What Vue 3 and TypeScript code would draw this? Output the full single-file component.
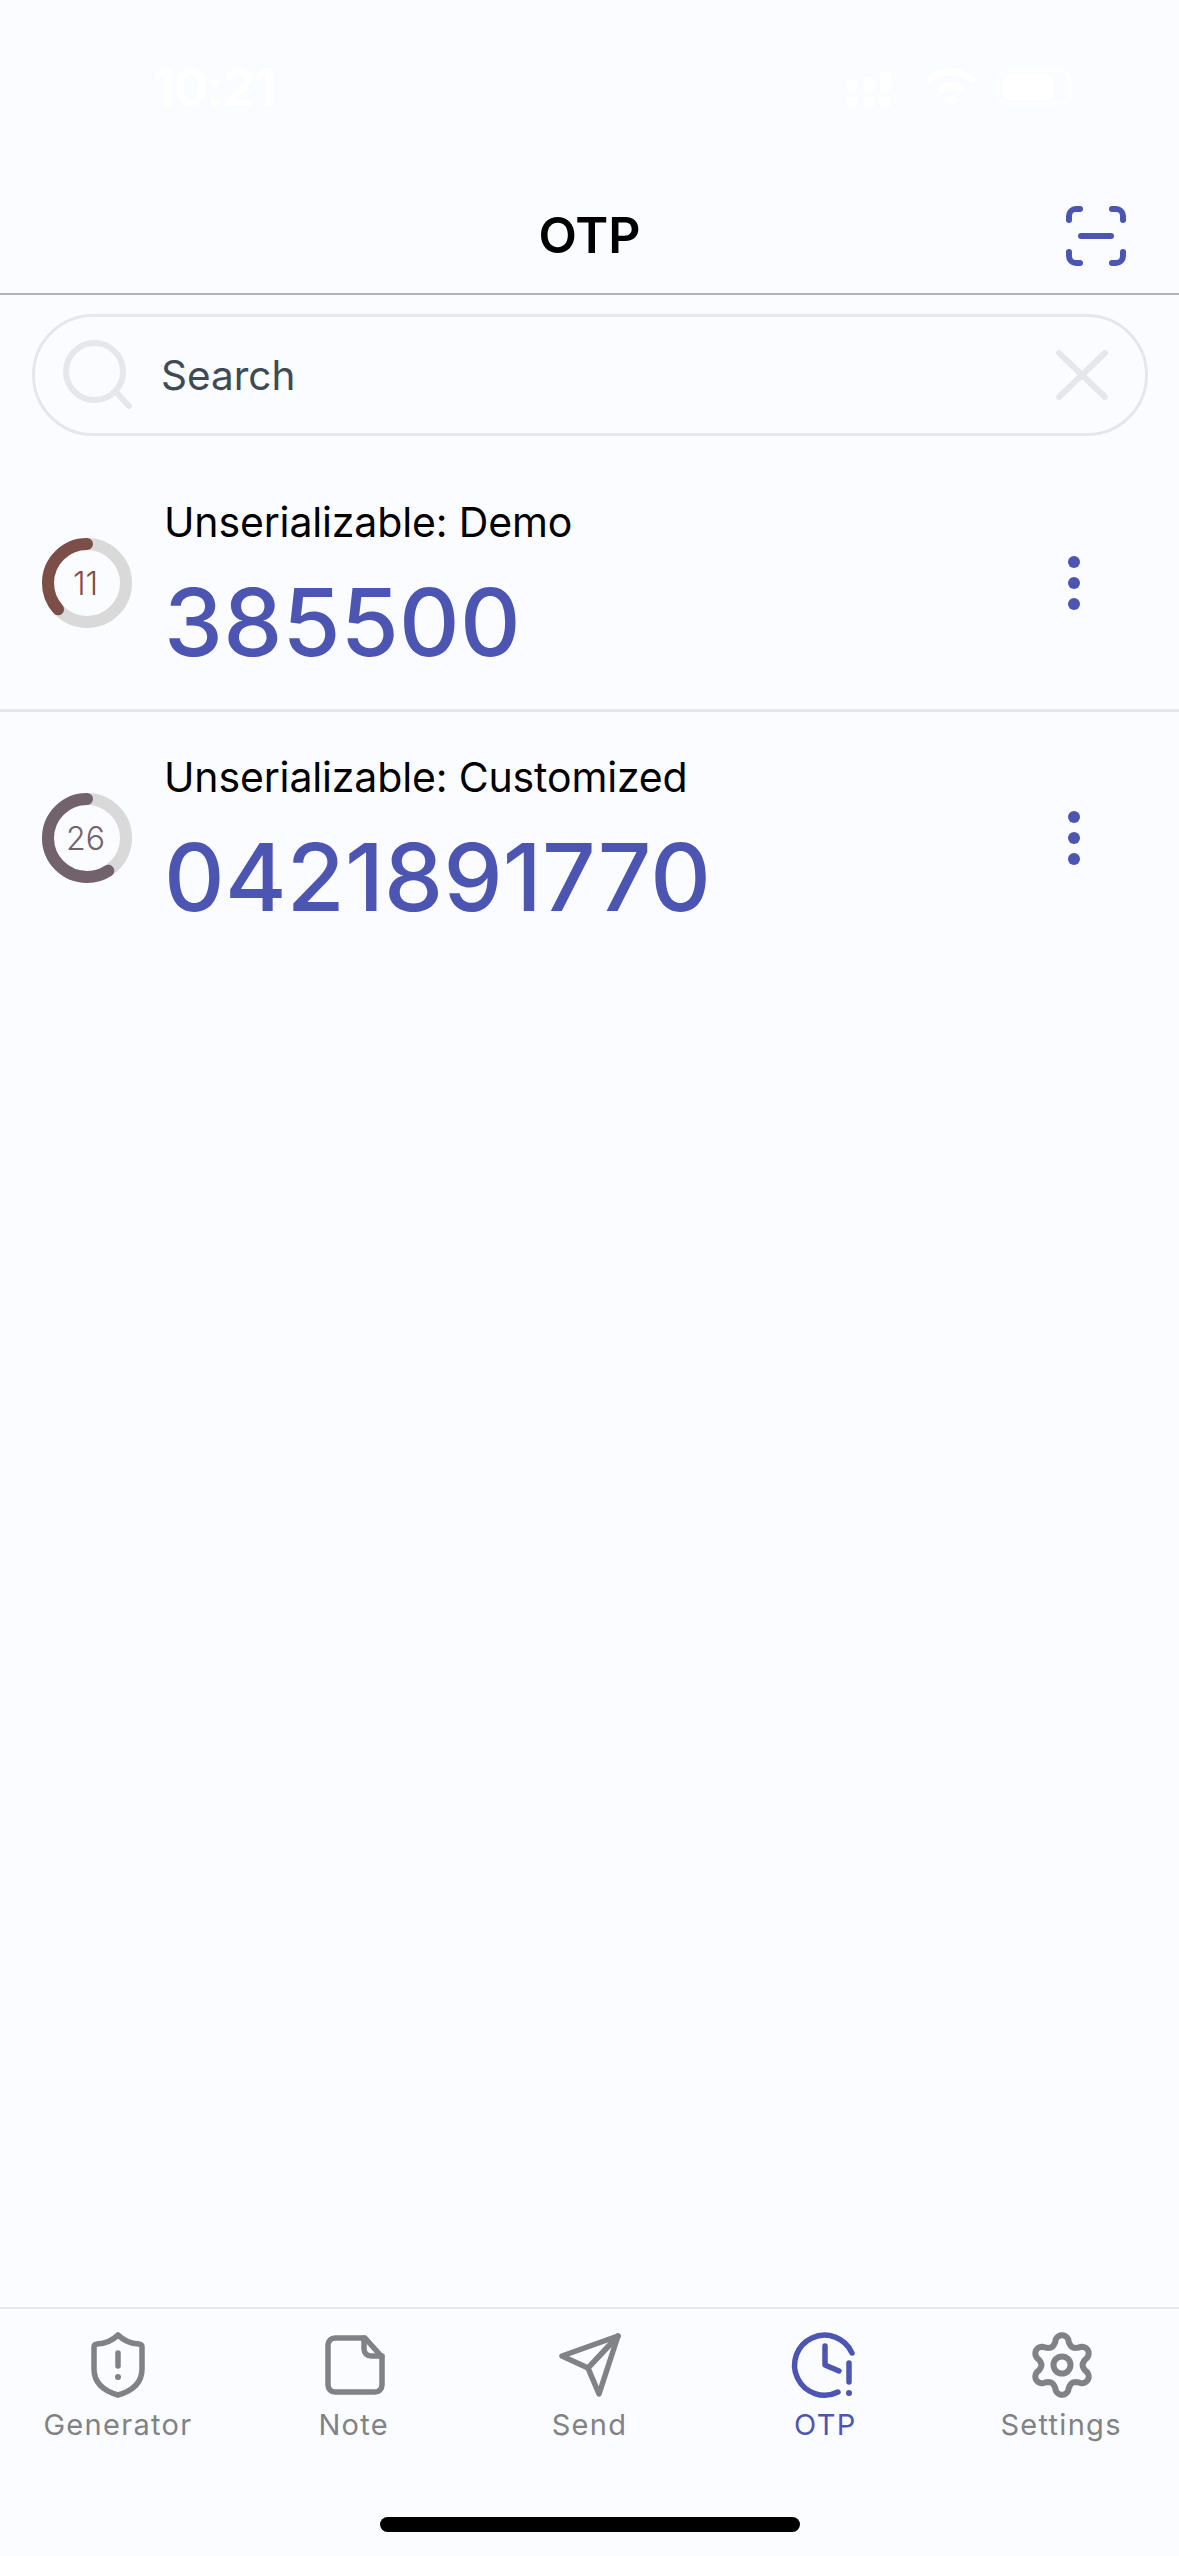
<script setup lang="ts">
const gearPath = (() => {
  const pts: string[] = []
  const n = 240
  for (let i = 0; i < n; i++) {
    const t = (i / n) * Math.PI * 2
    const c = Math.cos(6 * t)
    const r = 25.2 + 4.6 * Math.sign(c) * Math.pow(Math.abs(c), 0.7)
    const x = 37 + r * Math.sin(t)
    const y = 36 - r * Math.cos(t)
    pts.push(`${x.toFixed(2)} ${y.toFixed(2)}`)
  }
  return 'M' + pts.join('L') + 'Z'
})()

const circ = 2 * Math.PI * 39
const rows = [
  { title: 'Unserializable: Demo', code: '385500', left: 11, period: 30, color: '#7b4f47' },
  { title: 'Unserializable: Customized', code: '0421891770', left: 26, period: 44, color: '#71626c' },
]
const dash = (left: number, period: number) => `${(left / period) * circ} ${circ}`
</script>

<template>
  <div class="page">
    <div class="status">
      <span class="time">10:21</span>
      <svg class="status-icons" width="240" height="70" viewBox="0 0 240 70" fill="#fff">
        <rect x="7" y="30" width="10" height="12" rx="4" />
        <rect x="24" y="27" width="10" height="15" rx="4" />
        <rect x="40" y="22" width="10" height="20" rx="4" />
        <rect x="7" y="47" width="10" height="11" rx="4" />
        <rect x="24" y="47" width="10" height="11" rx="4" />
        <rect x="40" y="47" width="10" height="11" rx="4" />
        <path d="M90 30a30 30 0 0 1 42 0M101 39a15 15 0 0 1 20 0" fill="none" stroke="#fff" stroke-width="6" stroke-linecap="round" />
        <path d="M104 49a10 10 0 0 1 14 0L111 56Z" />
        <rect x="163" y="24" width="50" height="27" rx="9" />
        <rect x="158" y="21" width="72" height="33" rx="11" fill="none" stroke="#fff" stroke-width="3" opacity="0.5" />
      </svg>
    </div>

    <header class="bar">
      <h1 class="title">OTP</h1>
      <svg class="scan" width="72" height="72" viewBox="0 0 72 72" fill="none" stroke="#4c56b2" stroke-width="6" stroke-linecap="round">
        <path d="M9 20V16a7 7 0 0 1 7-7h4" />
        <path d="M52 9h4a7 7 0 0 1 7 7v4" />
        <path d="M9 52v4a7 7 0 0 0 7 7h4" />
        <path d="M63 52v4a7 7 0 0 1-7 7h-4" />
        <path d="M21 36h30" />
      </svg>
    </header>

    <div class="search">
      <svg class="search-icon" width="72" height="76" viewBox="0 0 72 76" fill="none" stroke="#e5e7eb" stroke-width="6" stroke-linecap="round">
        <circle cx="31.5" cy="34.5" r="28.5" />
        <path d="M52.5 54.5L66 69" />
      </svg>
      <span class="placeholder">Search</span>
      <svg class="clear" width="52" height="50" viewBox="0 0 52 50" fill="none" stroke="#e5e7eb" stroke-width="6" stroke-linecap="round">
        <path d="M3 3l46 44M49 3L3 47" />
      </svg>
    </div>

    <main class="list">
      <article v-for="(row, i) in rows" :key="row.code" class="row" :class="{ divided: i === 0 }">
        <div class="ring" :style="{ color: row.color }">
          <svg width="90" height="90" viewBox="0 0 90 90" fill="none" stroke-width="12">
            <circle cx="45" cy="45" r="39" stroke="#d9d9d9" />
            <circle
              cx="45"
              cy="45"
              r="39"
              :stroke="row.color"
              stroke-linecap="round"
              :stroke-dasharray="dash(row.left, row.period)"
              transform="translate(90 0) scale(-1 1) rotate(-90 45 45)"
            />
          </svg>
          <span class="ring-num">{{ row.left }}</span>
        </div>
        <div class="text">
          <div class="name">{{ row.title }}</div>
          <div class="code">{{ row.code }}</div>
        </div>
        <svg class="more" width="12" height="54" viewBox="0 0 12 54" fill="#4c56b2">
          <circle cx="6" cy="6" r="6" />
          <circle cx="6" cy="27" r="6" />
          <circle cx="6" cy="48" r="6" />
        </svg>
      </article>
    </main>

    <nav class="tabs">
      <div class="tab">
        <svg width="72" height="72" viewBox="0 0 72 72" fill="none" stroke="currentColor" stroke-width="5.5" stroke-linecap="round" stroke-linejoin="round">
          <path d="M36 6C41 11 48 14.5 57 15Q60 15.5 60 18V40C60 54 50 62 36 66C22 62 12 54 12 40V18Q12 15.5 15 15C24 14.5 31 11 36 6Z" />
          <path d="M36 24V37" />
          <circle cx="36" cy="48" r="3" fill="currentColor" stroke="none" />
        </svg>
        <span>Generator</span>
      </div>
      <div class="tab">
        <svg width="72" height="72" viewBox="0 0 72 72" fill="none" stroke="currentColor" stroke-width="5.5" stroke-linecap="round" stroke-linejoin="round">
          <path d="M17 9H47L64 28V56a7 7 0 0 1-7 7H17a7 7 0 0 1-7-7V16a7 7 0 0 1 7-7Z" />
          <path d="M46 9V20a7 7 0 0 0 7 7H64" />
        </svg>
        <span>Note</span>
      </div>
      <div class="tab">
        <svg width="72" height="72" viewBox="0 0 72 72" fill="none" stroke="currentColor" stroke-width="5.5" stroke-linecap="round" stroke-linejoin="round">
          <path d="M65 7L9 27L35 39L46 65Z" />
          <path d="M65 7L35 39" />
        </svg>
        <span>Send</span>
      </div>
      <div class="tab active">
        <svg width="72" height="72" viewBox="0 0 72 72" fill="none" stroke="currentColor" stroke-width="5.5" stroke-linecap="round" stroke-linejoin="round">
          <path d="M63 24A30 30 0 1 0 49 63" />
          <path d="M36 17V36L50 42" />
          <path d="M60 34V53" />
          <circle cx="60" cy="64" r="3" fill="currentColor" stroke="none" />
        </svg>
        <span>OTP</span>
      </div>
      <div class="tab">
        <svg width="72" height="72" viewBox="0 0 72 72" fill="none" stroke="currentColor" stroke-width="6" stroke-linecap="round" stroke-linejoin="round">
          <path :d="gearPath" />
          <circle cx="37" cy="36" r="8.5" />
        </svg>
        <span>Settings</span>
      </div>
    </nav>

    <div class="home-wrap">
      <div class="home"></div>
    </div>
  </div>
</template>

<style scoped>
.page {
  width: 1179px;
  height: 2556px;
  background: #fbfcff;
  display: flex;
  flex-direction: column;
  font-family: Inter, "Noto Sans", sans-serif;
  overflow: hidden;
}
.status {
  height: 171px;
  padding: 58px 99px 0 153px;
  box-sizing: border-box;
  display: flex;
  justify-content: space-between;
  align-items: flex-start;
}
.time {
  color: #fff;
  font-size: 52px;
  font-weight: 600;
  line-height: 60px;
  letter-spacing: -1px;
}
.status-icons {
  margin-top: -8px;
}
.bar {
  height: 124px;
  box-sizing: border-box;
  border-bottom: 2px solid #b3b3b3;
  display: flex;
  align-items: flex-start;
  justify-content: center;
  position: relative;
}
.title {
  margin: 34px 0 0;
  font-size: 50px;
  line-height: 60px;
  font-weight: 600;
  color: #000;
}
.scan {
  position: absolute;
  left: 1060px;
  top: 29px;
}
.search {
  margin: 19px 31px 0 32px;
  height: 122px;
  box-sizing: border-box;
  border: 3px solid #e5e7eb;
  border-radius: 61px;
  display: flex;
  align-items: center;
  padding: 0 37px 0 28px;
}
.search-icon {
  flex: none;
}
.placeholder {
  flex: 1;
  margin-left: 26px;
  font-size: 40.5px;
  color: #3f4a54;
}
.list {
  flex: 1;
  display: flex;
  flex-direction: column;
}
.row {
  height: 255px;
  box-sizing: border-box;
  display: flex;
  align-items: flex-start;
  padding: 40px 0 0 42px;
  position: relative;
}
.divided {
  border-bottom: 3px solid #e5e7eb;
  height: 276px;
  padding-top: 61px;
}
.ring {
  width: 90px;
  height: 90px;
  margin-top: 41px;
  position: relative;
  flex: none;
  margin-right: 32px;
}
.ring-num {
  position: absolute;
  inset: 0;
  display: flex;
  align-items: center;
  justify-content: center;
  font-size: 32px;
  font-weight: 300;
  padding: 0 3px 0 0;
  box-sizing: border-box;
}
.text {
  flex: 1;
}
.name {
  font-size: 41px;
  letter-spacing: -0.15px;
  line-height: 50px;
  color: #000;
}
.code {
  font-size: 94px;
  font-weight: 500;
  letter-spacing: 0.2px;
  line-height: 112px;
  margin-top: 19px;
  color: #4c56b2;
}
.more {
  flex: none;
  margin: 59px 99px 0 0;
}
.tabs {
  height: 139px;
  border-top: 2px solid #e5e7eb;
  box-sizing: border-box;
  display: grid;
  grid-template-columns: repeat(5, 1fr);
  padding-top: 20px;
}
.tab {
  display: flex;
  flex-direction: column;
  align-items: center;
  color: #808285;
  font-size: 29px;
  letter-spacing: 1.3px;
  line-height: 36px;
}
.tab svg {
  display: block;
  margin-bottom: 6px;
}
.tab.active {
  color: #4c56b2;
}
.home-wrap {
  height: 110px;
  display: flex;
  justify-content: center;
  padding-top: 71px;
  box-sizing: border-box;
}
.home {
  width: 420px;
  height: 15px;
  border-radius: 8px;
  background: #000;
}
</style>
